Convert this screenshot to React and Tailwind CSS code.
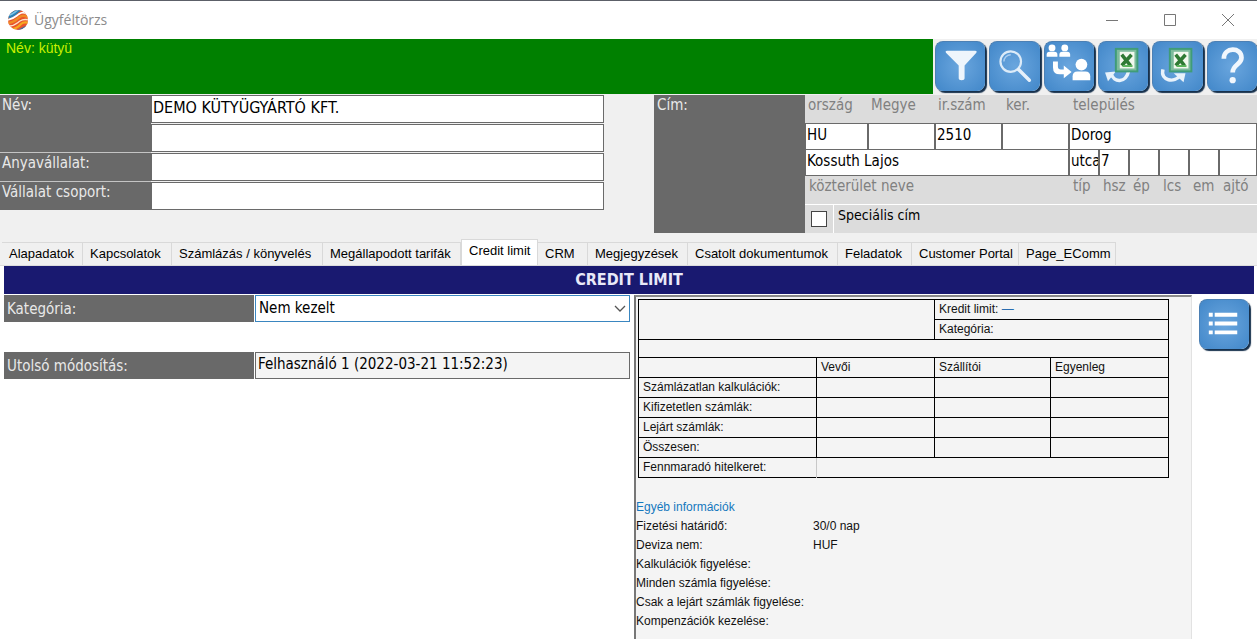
import { useState } from "react";

const tabs = [
  { name: "Alapadatok", width: "w-[81px]" },
  { name: "Kapcsolatok", width: "w-[89px]" },
  { name: "Számlázás / könyvelés", width: "w-[151px]" },
  { name: "Megállapodott tarifák", width: "w-[138px]" },
  { name: "Credit limit", width: "w-[77px]" },
  { name: "CRM", width: "w-[50px]" },
  { name: "Megjegyzések", width: "w-[100px]" },
  { name: "Csatolt dokumentumok", width: "w-[150px]" },
  { name: "Feladatok", width: "w-[74px]" },
  { name: "Customer Portal", width: "w-[107px]" },
  { name: "Page_EComm", width: "w-[97px]" },
];

const balanceRows = [
  "Számlázatlan kalkulációk:",
  "Kifizetetlen számlák:",
  "Lejárt számlák:",
  "Összesen:",
];

const infoRows = [
  ["Fizetési határidő:", "30/0 nap"],
  ["Deviza nem:", "HUF"],
  ["Kalkulációk figyelése:", ""],
  ["Minden számla figyelése:", ""],
  ["Csak a lejárt számlák figyelése:", ""],
  ["Kompenzációk kezelése:", ""],
];

/* ===== ICONS ===== */

function AppLogo() {
  return (
    <svg viewBox="0 0 20 20" className="w-5 h-5 shrink-0" aria-hidden="true">
      <defs>
        <clipPath id="ball">
          <circle cx="10" cy="10" r="10" />
        </clipPath>
      </defs>
      <g clipPath="url(#ball)">
        <rect width="20" height="20" fill="#e9542d" />
        <path d="M-1 9C4 8 6 7 9 4S14-1 19-1H-1Z" fill="#2b7fb5" />
        <path d="M-1 6C4 5 7 2 11-1" fill="none" stroke="#7cc3e6" strokeWidth="1.4" />
        <path d="M-1 10C6 9 8 6 11 4S16 2 19 4" fill="none" stroke="#fff" strokeWidth="1.8" />
        <path d="M-1 13C6 13 8 10 11 7.500S17 5 21 8" fill="none" stroke="#f08a24" strokeWidth="2.400" />
        <path d="M1 16C7 16 9 13 12 11S17 9 21 10" fill="none" stroke="#fde3c8" strokeWidth="1.300" />
        <path d="M3 19C9 19 11 16 13 14S18 12 21 13" fill="none" stroke="#f6a81f" strokeWidth="2.200" />
        <path d="M9 21C13 20 15 17 20 16" fill="none" stroke="#3b6fa5" strokeWidth="1.600" />
      </g>
    </svg>
  );
}

function FilterIcon() {
  return (
    <svg viewBox="0 0 50 50" className="w-full h-full" aria-hidden="true">
      <path d="M11 9h29q2 0 1 2L29 24v13q0 2-3 2t-3-2V24L10 11q-1-2 1-2Z" fill="#eef5fc" />
    </svg>
  );
}

function SearchIcon() {
  return (
    <svg viewBox="0 0 50 50" className="w-full h-full" fill="none" aria-hidden="true">
      <circle cx="21" cy="20" r="10.500" stroke="#dcebf8" strokeWidth="2.200" />
      <path d="M14 20a7 7 0 0 1 7-7" stroke="#a9cdf0" strokeWidth="1.500" />
      <path d="m29 28 11 11" stroke="#e6f0fa" strokeWidth="3.500" strokeLinecap="round" />
    </svg>
  );
}

function MergeIcon() {
  return (
    <svg viewBox="0 0 50 50" className="w-full h-full" fill="#fff" aria-hidden="true">
      <circle cx="7" cy="6" r="3.500" />
      <path d="M1.500 15v-2q0-3 3-3h5q3 0 3 3v2Z" />
      <circle cx="20" cy="6" r="3.500" />
      <path d="M14.500 15v-2q0-3 3-3h5q3 0 3 3v2Z" />
      <path d="M8 20h5v5q0 3 3 3h3v-4l8 6.500-8 6.500v-4h-4q-7 0-7-7Z" />
      <circle cx="37" cy="23" r="6" />
      <path d="M28 39v-4q0-5 5-5h8q5 0 5 5v4Z" />
    </svg>
  );
}

function ExcelIcon({ direction }) {
  return (
    <svg viewBox="0 0 50 50" className="w-full h-full" aria-hidden="true">
      {direction === "in" ? (
        <>
          <path d="M12 32c3 10 15 10 18-2" fill="none" stroke="#e8f2fb" strokeWidth="3.500" />
          <path d="M6 31 17 30 9 40Z" fill="#e8f2fb" />
        </>
      ) : (
        <>
          <path d="M10 28c-3 12 12 14 18 6" fill="none" stroke="#e8f2fb" strokeWidth="3.500" />
          <path d="M21 32 33 32 31 41Z" fill="#e8f2fb" />
        </>
      )}
      <rect x="16" y="6" width="24" height="25" fill="#3f9c78" />
      <rect x="18" y="8" width="20" height="21" fill="#7dbb9c" />
      <rect x="21" y="10" width="15" height="17" fill="#f2f8ee" />
      <path d="m23 13 9 11M33 13l-10 11" stroke="#2f7a34" strokeWidth="3.600" />
      <path d="M24 24.500h10" stroke="#5bb45c" strokeWidth="2" />
    </svg>
  );
}

function HelpIcon() {
  return (
    <svg viewBox="0 0 50 50" className="w-full h-full" aria-hidden="true">
      <path d="M16 17c0-12 18-12 18-1 0 7-9 7-9 15" fill="none" stroke="#f1f7fd" strokeWidth="4.800" />
      <circle cx="25" cy="39" r="3.200" fill="#f1f7fd" />
    </svg>
  );
}

function ListIcon() {
  return (
    <svg viewBox="0 0 50 50" className="w-full h-full" fill="#fff" aria-hidden="true">
      <path d="M9 13h4v4H9zM15 13h23v4H15zM9 22h4v4H9zM15 22h23v4H15zM9 31h4v4H9zM15 31h23v4H15z" />
    </svg>
  );
}

/* ===== CONTROLS ===== */

function ToolButton({ label, children }) {
  return (
    <button
      type="button"
      aria-label={label}
      className="h-[50px] w-full rounded-lg bg-radial from-[#6aa6de] to-[#4187c9] border-t border-l border-[#4c80b4] shadow-[2px_2px_1px_#16304c]"
    >
      {children}
    </button>
  );
}

function Field({ id, label, value = "", className = "" }) {
  return (
    <input
      id={id}
      aria-label={label}
      defaultValue={value}
      className={`min-w-0 w-full bg-white border border-[#6a6a6a] pl-px pb-1 outline-none ${className}`}
    />
  );
}

export default function App() {
  const [active, setActive] = useState("Credit limit");

  return (
    <div className="min-h-screen flex flex-col bg-[#f0f0f0] border-t border-[#5c6068] overflow-hidden font-['DejaVu_Sans_Condensed','DejaVu_Sans',sans-serif] text-[15px] leading-5 text-[#111]">

      {/* ===== TITLE BAR ===== */}
      <header className="h-[38px] shrink-0 bg-white flex items-center pl-2">
        <AppLogo />
        <h1 className="flex-1 pl-[6px] font-['Open_Sans','Noto_Sans',sans-serif] text-[14px] text-[#8c8c8c]">Ügyféltörzs</h1>
        <div className="flex text-[#777]">
          <button type="button" aria-label="Minimize" className="w-[58px] h-9 flex items-center justify-center">
            <svg viewBox="0 0 12 12" className="w-3 h-3" stroke="currentColor"><path d="M0 6.500h12" /></svg>
          </button>
          <button type="button" aria-label="Maximize" className="w-[58px] h-9 flex items-center justify-center">
            <svg viewBox="0 0 12 12" className="w-3 h-3" stroke="currentColor" fill="none"><path d="M.5.5h11v11H.5z" /></svg>
          </button>
          <button type="button" aria-label="Close" className="w-[58px] h-9 flex items-center justify-center">
            <svg viewBox="0 0 12 12" className="w-3 h-3" stroke="currentColor"><path d="m0 0 12 12M12 0 0 12" /></svg>
          </button>
        </div>
      </header>

      {/* ===== GREEN BAR + TOOLBAR ===== */}
      <div className="flex h-[55px] shrink-0">
        <div className="flex-1 bg-[#008000] pl-[6px] font-['Liberation_Sans',sans-serif] text-[14px] leading-[18px] text-[#c8f000]">
          Név: kütyü
        </div>
        <div className="w-[324px] grid grid-cols-6 gap-1 pl-[2px] pt-[2px]">
          <ToolButton label="Szűrés"><FilterIcon /></ToolButton>
          <ToolButton label="Keresés"><SearchIcon /></ToolButton>
          <ToolButton label="Összevonás"><MergeIcon /></ToolButton>
          <ToolButton label="Excel import"><ExcelIcon direction="in" /></ToolButton>
          <ToolButton label="Excel export"><ExcelIcon direction="out" /></ToolButton>
          <ToolButton label="Súgó"><HelpIcon /></ToolButton>
        </div>
      </div>

      {/* ===== CUSTOMER DATA ===== */}
      <section className="grid grid-cols-[604fr_50fr_603fr] pt-px">
        <div className="grid grid-cols-[151px_1fr] grid-rows-[29px_29px_29px_28px] content-start text-[#e8e8e8]">
          <label htmlFor="nev" className="row-span-2 bg-[#696969] border-b border-[#c4c4c4] pl-[2px]">Név:</label>
          <Field id="nev" value="DEMO KÜTYÜGYÁRTÓ KFT." className="h-7 text-black text-base" />
          <Field id="nev2" label="Név folytatása" className="h-7 text-black text-base" />
          <label htmlFor="anya" className="bg-[#696969] border-b border-[#c4c4c4] pl-[2px]">Anyavállalat:</label>
          <Field id="anya" className="h-7 text-black" />
          <label htmlFor="csoport" className="bg-[#696969] pl-[2px]">Vállalat csoport:</label>
          <Field id="csoport" className="h-7 text-black" />
        </div>

        <div className="col-start-3 grid grid-cols-[151px_1fr]">
          <div className="bg-[#696969] text-[#e8e8e8] pl-[3px]">Cím:</div>
          <div className="text-[#808080] bg-[#dcdcdc]">
            <div className="grid grid-cols-[63px_67px_67px_67px_1fr]">
              <label htmlFor="orszag" className="h-7 pl-[3px]">ország</label>
              <label htmlFor="megye" className="h-7 pl-[3px]">Megye</label>
              <label htmlFor="irszam" className="h-7 pl-[3px]">ir.szám</label>
              <label htmlFor="ker" className="h-7 pl-1">ker.</label>
              <label htmlFor="telepules" className="h-7 pl-1">település</label>
              <Field id="orszag" value="HU" className="h-[27px] text-black" />
              <Field id="megye" className="h-[27px] text-black" />
              <Field id="irszam" value="2510" className="h-[27px] text-black" />
              <Field id="ker" className="h-[27px] text-black" />
              <Field id="telepules" value="Dorog" className="h-[27px] text-black" />
            </div>
            <div className="grid grid-cols-[264px_30px_30px_30px_30px_30px_1fr]">
              <Field id="kozterulet" value="Kossuth Lajos" className="h-[26px] border-t-0 text-black" />
              <Field id="tip" value="utca" className="h-[26px] border-t-0 text-black" />
              <Field id="hsz" value="7" className="h-[26px] border-t-0 text-black" />
              <Field id="ep" className="h-[26px] border-t-0 text-black" />
              <Field id="lcs" className="h-[26px] border-t-0 text-black" />
              <Field id="em" className="h-[26px] border-t-0 text-black" />
              <Field id="ajto" className="h-[26px] border-t-0 text-black" />
              <label htmlFor="kozterulet" className="h-7 pl-1">közterület neve</label>
              <label htmlFor="tip" className="h-7 pl-1">típ</label>
              <label htmlFor="hsz" className="h-7 pl-1">hsz</label>
              <label htmlFor="ep" className="h-7 pl-1">ép</label>
              <label htmlFor="lcs" className="h-7 pl-1">lcs</label>
              <label htmlFor="em" className="h-7 pl-1">em</label>
              <label htmlFor="ajto" className="h-7 pl-1">ajtó</label>
            </div>
            <div className="flex border-t border-white text-black">
              <div className="w-7 h-7 flex items-center justify-center">
                <input
                  id="specialis"
                  type="checkbox"
                  className="appearance-none w-4 h-4 bg-white border border-[#444] checked:bg-[#0078d7]"
                />
              </div>
              <label htmlFor="specialis" className="flex-1 border-l border-white pl-1 text-[14px]">Speciális cím</label>
            </div>
          </div>
        </div>
      </section>

      {/* ===== TABS ===== */}
      <div role="tablist" className="flex items-end h-7 shrink-0 mt-1 pl-[2px] font-['Liberation_Sans',sans-serif] text-[13px]">
        {tabs.map((tab) => (
          <button
            key={tab.name}
            type="button"
            role="tab"
            aria-selected={active === tab.name}
            onClick={() => setActive(tab.name)}
            className={`${tab.width} shrink-0 border-t border-r border-[#d9d9d9] pl-[7px] text-left whitespace-nowrap text-black ${
              active === tab.name ? "h-[26px] bg-white border-l pb-1" : "h-[23px]"
            }`}
          >
            {tab.name}
          </button>
        ))}
      </div>

      {/* ===== CREDIT LIMIT PAGE ===== */}
      <main className="flex-1 flex flex-col bg-white border-t border-[#dcdcdc] pl-1">
        <h2 className="h-7 mr-[3px] bg-[#191970] text-[#e8e8f8] text-base font-bold text-center leading-7">CREDIT LIMIT</h2>

        <div className="flex-1 grid grid-cols-[626fr_4fr_558fr_65px] pt-px">
          <div className="grid grid-cols-[251px_1fr] auto-rows-[27px] content-start gap-y-[30px]">
            <label htmlFor="kategoria" className="bg-[#696969] text-[#e8e8e8] pl-[3px] mr-px leading-7">Kategória:</label>
            <div className="grid items-center">
              <select
                id="kategoria"
                className="col-start-1 row-start-1 appearance-none h-[27px] w-full bg-white border border-[#3a86c0] pl-[3px] pb-px text-black outline-none"
              >
                <option>Nem kezelt</option>
              </select>
              <svg viewBox="0 0 12 8" className="col-start-1 row-start-1 justify-self-end mr-1 w-3 h-2 pointer-events-none" fill="none" stroke="#555" strokeWidth="1.300">
                <path d="m1 1 5 5 5-5" />
              </svg>
            </div>
            <label htmlFor="modositas" className="bg-[#696969] text-[#e8e8e8] pl-[3px] mr-px leading-7">Utolsó módosítás:</label>
            <input
              id="modositas"
              readOnly
              value="Felhasználó 1 (2022-03-21 11:52:23)"
              className="h-[27px] w-full bg-[#f4f4f4] border border-[#6a6a6a] pl-[2px] pb-1 text-black outline-none"
            />
          </div>

          <div className="col-start-3 bg-[#f4f4f4] border-t-2 border-l-2 border-t-[#8a8a8a] border-l-[#777] border-r border-r-[#e2e2e2] font-['Liberation_Sans',sans-serif] text-[12px] leading-[19px]">
            <table className="mt-[2px] ml-[2px] w-[530px] table-fixed border-collapse border border-black text-left">
              <colgroup>
                <col className="w-[178px]" />
                <col className="w-[118px]" />
                <col className="w-[116px]" />
                <col className="w-[118px]" />
              </colgroup>
              <tbody>
                <tr className="h-5">
                  <td colSpan={2} rowSpan={2} className="border border-black" />
                  <td colSpan={2} className="border border-black pl-1">
                    Kredit limit: <span className="text-[#2a6db0]">—</span>
                  </td>
                </tr>
                <tr className="h-5">
                  <td colSpan={2} className="border border-black pl-1">Kategória:</td>
                </tr>
                <tr className="h-[18px]">
                  <td colSpan={4} className="border border-black" />
                </tr>
                <tr className="h-5">
                  <td className="border border-black" />
                  <th scope="col" className="border border-black pl-1 font-normal">Vevői</th>
                  <th scope="col" className="border border-black pl-1 font-normal">Szállítói</th>
                  <th scope="col" className="border border-black pl-1 font-normal">Egyenleg</th>
                </tr>
                {balanceRows.map((row) => (
                  <tr key={row} className="h-5">
                    <th scope="row" className="border border-black pl-1 font-normal">{row}</th>
                    <td className="border border-black" />
                    <td className="border border-black" />
                    <td className="border border-black" />
                  </tr>
                ))}
                <tr className="h-5">
                  <th scope="row" className="border-r border-r-[#c8c8c8] pl-1 font-normal">Fennmaradó hitelkeret:</th>
                  <td colSpan={3} />
                </tr>
              </tbody>
            </table>

            <h3 className="mt-5 text-[#1478be]">Egyéb információk</h3>
            <dl className="grid grid-cols-[177px_1fr]">
              {infoRows.map(([name, value]) => (
                <div key={name} className="contents">
                  <dt>{name}</dt>
                  <dd>{value}</dd>
                </div>
              ))}
            </dl>
          </div>

          <div className="pl-[7px] pt-1 w-[57px]">
            <ToolButton label="Lista"><ListIcon /></ToolButton>
          </div>
        </div>
      </main>
    </div>
  );
}
